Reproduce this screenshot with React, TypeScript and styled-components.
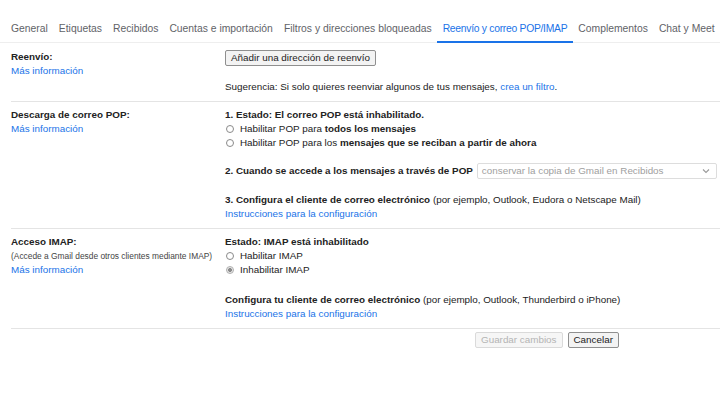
import React from "react";
import styled, { createGlobalStyle } from "styled-components";

const GlobalStyle = createGlobalStyle`
	html, body {
		margin: 0;
		padding: 0;
		background: #ffffff;
	}
	body {
		font-family: "Liberation Sans", Arial, Helvetica, sans-serif;
		color: #222222;
		font-size: 9.85px;
	}
`;

const tabs = [
	"General",
	"Etiquetas",
	"Recibidos",
	"Cuentas e importación",
	"Filtros y direcciones bloqueadas",
	"Reenvío y correo POP/IMAP",
	"Complementos",
	"Chat y Meet",
];

const App: React.FC = () => {
	return (
		<Page>
			<GlobalStyle />
			<TabBar>
				{tabs.map((t) => (
					<Tab key={t} $active={t === "Reenvío y correo POP/IMAP"}>
						{t}
					</Tab>
				))}
			</TabBar>

			<Section $top={7}>
				<LabelCol>
					<Label>Reenvío:</Label>
					<Link>Más información</Link>
				</LabelCol>
				<ContentCol>
					<Button>Añadir una dirección de reenvío</Button>
					<Block $gap={14}>
						Sugerencia: Si solo quieres reenviar algunos de tus mensajes, <Link>crea un filtro</Link>.
					</Block>
				</ContentCol>
			</Section>

			<Section $top={6}>
				<LabelCol>
					<Label>Descarga de correo POP:</Label>
					<Link>Más información</Link>
				</LabelCol>
				<ContentCol>
					<Line>
						<b>1. Estado: El correo POP está inhabilitado.</b>
					</Line>
					<RadioRow>
						<Radio />
						<span>
							Habilitar POP para <b>todos los mensajes</b>
						</span>
					</RadioRow>
					<RadioRow>
						<Radio />
						<span>
							Habilitar POP para los <b>mensajes que se reciban a partir de ahora</b>
						</span>
					</RadioRow>
					<SelectRow>
						<b>2. Cuando se accede a los mensajes a través de POP</b>
						<Select>
							<span>conservar la copia de Gmail en Recibidos</span>
							<svg width="8" height="6" viewBox="0 0 8 6">
								<path d="M1 1.5 L4 4.5 L7 1.5" fill="none" stroke="#9a9a9a" strokeWidth="1.1" />
							</svg>
						</Select>
					</SelectRow>
					<Block $gap={14}>
						<b>3. Configura el cliente de correo electrónico</b> (por ejemplo, Outlook, Eudora o Netscape Mail)
					</Block>
					<Line>
						<Link>Instrucciones para la configuración</Link>
					</Line>
				</ContentCol>
			</Section>

			<Section $top={6}>
				<LabelCol>
					<Label>Acceso IMAP:</Label>
					<Note>(Accede a Gmail desde otros clientes mediante IMAP)</Note>
					<Link>Más información</Link>
				</LabelCol>
				<ContentCol>
					<Line>
						<b>Estado: IMAP está inhabilitado</b>
					</Line>
					<RadioRow>
						<Radio />
						<span>Habilitar IMAP</span>
					</RadioRow>
					<RadioRow>
						<Radio $checked />
						<span>Inhabilitar IMAP</span>
					</RadioRow>
					<Block $gap={16}>
						<b>Configura tu cliente de correo electrónico</b> (por ejemplo, Outlook, Thunderbird o iPhone)
					</Block>
					<Line>
						<Link>Instrucciones para la configuración</Link>
					</Line>
				</ContentCol>
			</Section>

			<Footer>
				<Button disabled>Guardar cambios</Button>
				<Button>Cancelar</Button>
			</Footer>
		</Page>
	);
};

export default App;

const Page = styled.div`
	width: 720px;
	height: 405px;
	overflow: hidden;
	padding-top: 18px;
	box-sizing: border-box;
`;

const TabBar = styled.div`
	display: flex;
	align-items: stretch;
	padding-left: 5.5px;
	border-bottom: 1px solid #eeeeee;
`;

const Tab = styled.div<{ $active?: boolean }>`
	box-sizing: border-box;
	height: 25px;
	padding: 4px 5.5px 0;
	line-height: 14px;
	font-size: 10.35px;
	white-space: nowrap;
	letter-spacing: ${(p) => (p.$active ? "-0.28px" : "0")};
	color: ${(p) => (p.$active ? "#1a73e8" : "#5f6368")};
	border-bottom: 2px solid ${(p) => (p.$active ? "#1a73e8" : "transparent")};
	margin-bottom: -1px;
`;

const Section = styled.div<{ $top: number }>`
	display: grid;
	grid-template-columns: 214px 1fr;
	margin-left: 11px;
	padding: ${(p) => p.$top}px 0 7px;
	border-bottom: 1px solid #e4e4e4;
	line-height: 14px;
`;

const LabelCol = styled.div`
	display: flex;
	flex-direction: column;
`;

const ContentCol = styled.div`
	display: flex;
	flex-direction: column;
	align-items: flex-start;
`;

const Label = styled.div`
	font-weight: bold;
	color: #222222;
`;

const Note = styled.div`
	font-size: 8.4px;
	color: #444444;
	line-height: 14px;
	white-space: nowrap;
`;

const Link = styled.span`
	color: #1a73e8;
	cursor: pointer;
`;

const Line = styled.div`
	white-space: nowrap;
`;

const Block = styled.div<{ $gap: number }>`
	margin-top: ${(p) => p.$gap}px;
	white-space: nowrap;
`;

const RadioRow = styled.div`
	display: flex;
	align-items: center;
	gap: 6px;
	white-space: nowrap;
	padding-left: 1px;
`;

const Radio = styled.span<{ $checked?: boolean }>`
	width: 8px;
	height: 8px;
	border-radius: 50%;
	box-sizing: border-box;
	border: 1px solid ${(p) => (p.$checked ? "#b0b0b0" : "#8a8a8a")};
	background: ${(p) => (p.$checked ? "radial-gradient(circle, #8a8a8a 0 1.8px, #e6e6e6 2.2px)" : "#ffffff")};
	flex: none;
`;

const SelectRow = styled.div`
	display: flex;
	align-items: center;
	gap: 4px;
	margin-top: 13px;
	white-space: nowrap;
`;

const Select = styled.div`
	width: 240px;
	height: 16px;
	box-sizing: border-box;
	border: 1px solid #dddddd;
	border-radius: 2px;
	display: flex;
	align-items: center;
	justify-content: space-between;
	padding: 0 6px 0 4px;
	color: #a0a0a0;
	background: #ffffff;
`;

const Button = styled.button`
	font-family: inherit;
	font-size: 9.85px;
	height: 16px;
	padding: 0 5px;
	line-height: 14px;
	border: 1px solid #8f8f8f;
	border-radius: 2px;
	background: #f3f3f3;
	color: #222222;
	white-space: nowrap;
	&:disabled {
		border-color: #dadada;
		background: #f6f6f6;
		color: #b4b4b4;
	}
`;

const Footer = styled.div`
	display: flex;
	gap: 5px;
	padding: 3px 0 0 475px;
`;
